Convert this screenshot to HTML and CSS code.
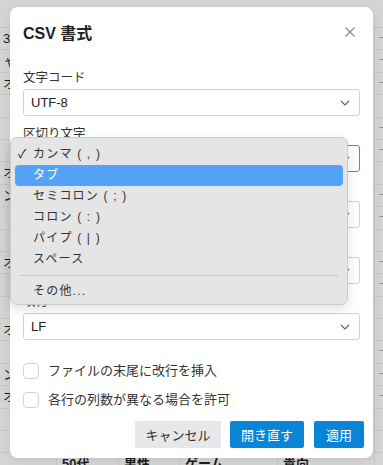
FILE: index.html
```html
<!DOCTYPE html>
<html lang="ja">
<head>
<meta charset="utf-8">
<link rel="stylesheet" href="styles.css">
</head>
<body>
<div class="sheet">
  <div class="sheet-top"></div>
  <div class="rows">
    <div class="row"><span class="c c1">3</span><span class="c c2"></span><span class="c c3"></span><span class="c c4"></span><span class="c c5"></span><span class="c c6">一</span></div>
    <div class="row"><span class="c c1">ャ</span><span class="c c2"></span><span class="c c3"></span><span class="c c4"></span><span class="c c5"></span><span class="c c6">一</span></div>
    <div class="row"><span class="c c1">オ</span><span class="c c2"></span><span class="c c3"></span><span class="c c4"></span><span class="c c5"></span><span class="c c6">一</span></div>
    <div class="row"><span class="c c1"></span><span class="c c2"></span><span class="c c3"></span><span class="c c4"></span><span class="c c5"></span><span class="c c6">丨</span></div>
    <div class="row"><span class="c c1"></span><span class="c c2"></span><span class="c c3"></span><span class="c c4"></span><span class="c c5"></span><span class="c c6">一</span></div>
    <div class="row"><span class="c c1"></span><span class="c c2"></span><span class="c c3"></span><span class="c c4"></span><span class="c c5"></span><span class="c c6">一</span></div>
    <div class="row"><span class="c c1">オ</span><span class="c c2"></span><span class="c c3"></span><span class="c c4"></span><span class="c c5"></span><span class="c c6">丨</span></div>
    <div class="row"><span class="c c1">ン</span><span class="c c2"></span><span class="c c3"></span><span class="c c4"></span><span class="c c5"></span><span class="c c6">一</span></div>
    <div class="row"><span class="c c1"></span><span class="c c2"></span><span class="c c3"></span><span class="c c4"></span><span class="c c5"></span><span class="c c6">一</span></div>
    <div class="row"><span class="c c1"></span><span class="c c2"></span><span class="c c3"></span><span class="c c4"></span><span class="c c5"></span><span class="c c6">丨</span></div>
    <div class="row"><span class="c c1">オ</span><span class="c c2"></span><span class="c c3"></span><span class="c c4"></span><span class="c c5"></span><span class="c c6">一</span></div>
    <div class="row"><span class="c c1"></span><span class="c c2"></span><span class="c c3"></span><span class="c c4"></span><span class="c c5"></span><span class="c c6">一</span></div>
    <div class="row"><span class="c c1"></span><span class="c c2"></span><span class="c c3"></span><span class="c c4"></span><span class="c c5"></span><span class="c c6">丨</span></div>
    <div class="row"><span class="c c1">オ</span><span class="c c2"></span><span class="c c3"></span><span class="c c4"></span><span class="c c5"></span><span class="c c6">丨</span></div>
    <div class="row"><span class="c c1"></span><span class="c c2"></span><span class="c c3"></span><span class="c c4"></span><span class="c c5"></span><span class="c c6">一</span></div>
    <div class="row"><span class="c c1">ン</span><span class="c c2"></span><span class="c c3"></span><span class="c c4"></span><span class="c c5"></span><span class="c c6">一</span></div>
    <div class="row"><span class="c c1">オ</span><span class="c c2"></span><span class="c c3"></span><span class="c c4"></span><span class="c c5"></span><span class="c c6">一</span></div>
    <div class="row"><span class="c c1"></span><span class="c c2"></span><span class="c c3"></span><span class="c c4"></span><span class="c c5"></span><span class="c c6">丨</span></div>
    <div class="row"><span class="c c1"></span><span class="c c2"></span><span class="c c3"></span><span class="c c4"></span><span class="c c5"></span><span class="c c6">丨</span></div>
    <div class="row"><span class="c c1"></span><span class="c c2">50代</span><span class="c c3">男性</span><span class="c c4">ゲーム</span><span class="c c5">貴向</span><span class="c c6"></span></div>
  </div>
</div>

<div class="dialog">
  <div class="dialog-head">
    <h1 class="dialog-title">CSV 書式</h1>
    <svg class="close" width="12" height="12" viewBox="0 0 12 12"><path d="M1.5 1.5 L10.5 10.5 M10.5 1.5 L1.5 10.5" stroke="#8a8a8a" stroke-width="1.2" fill="none"/></svg>
  </div>
  <div class="fields">
    <div class="field">
      <div class="label">文字コード</div>
      <div class="select"><span>UTF-8</span><svg class="chev" width="10" height="6" viewBox="0 0 10 6"><path d="M1 1 L5 5 L9 1" stroke="#666" stroke-width="1.2" fill="none"/></svg></div>
    </div>
    <div class="field">
      <div class="label">区切り文字</div>
      <div class="select focus"><span>カンマ ( , )</span><svg class="chev" width="10" height="6" viewBox="0 0 10 6"><path d="M1 1 L5 5 L9 1" stroke="#666" stroke-width="1.2" fill="none"/></svg></div>
    </div>
    <div class="field">
      <div class="label">引用符</div>
      <div class="select"><span>"</span><svg class="chev" width="10" height="6" viewBox="0 0 10 6"><path d="M1 1 L5 5 L9 1" stroke="#666" stroke-width="1.2" fill="none"/></svg></div>
    </div>
    <div class="field">
      <div class="label">エスケープ</div>
      <div class="select"><span>"</span><svg class="chev" width="10" height="6" viewBox="0 0 10 6"><path d="M1 1 L5 5 L9 1" stroke="#666" stroke-width="1.2" fill="none"/></svg></div>
    </div>
    <div class="field">
      <div class="label">改行</div>
      <div class="select"><span>LF</span><svg class="chev" width="10" height="6" viewBox="0 0 10 6"><path d="M1 1 L5 5 L9 1" stroke="#666" stroke-width="1.2" fill="none"/></svg></div>
    </div>
  </div>
  <div class="checks">
    <label class="check"><span class="box"></span><span>ファイルの末尾に改行を挿入</span></label>
    <label class="check"><span class="box"></span><span>各行の列数が異なる場合を許可</span></label>
  </div>
  <div class="actions">
    <button class="btn btn-gray">キャンセル</button>
    <button class="btn btn-blue">開き直す</button>
    <button class="btn btn-blue">適用</button>
  </div>
</div>

<div class="menu">
  <div class="item"><span class="tick">✓</span>カンマ ( , )</div>
  <div class="item active">タブ</div>
  <div class="item">セミコロン ( ; )</div>
  <div class="item">コロン ( : )</div>
  <div class="item">パイプ ( | )</div>
  <div class="item">スペース</div>
  <div class="sep"></div>
  <div class="item">その他...</div>
</div>
</body>
</html>
```

FILE: styles.css
```css
* { box-sizing: border-box; }
html, body {
  margin: 0;
  padding: 0;
  width: 383px;
  height: 465px;
  overflow: hidden;
  background: #d4d4d4;
  font-family: "Liberation Sans", "Noto Sans CJK JP", sans-serif;
  color: #222;
}

/* background spreadsheet (dimmed) */
.sheet { width: 383px; }
.sheet-top { height: 28px; border-bottom: 1px solid #c3c3c3; }
.row {
  display: flex;
  height: 22.4px;
  border-bottom: 1px solid #c6c6c6;
  font-size: 13px;
  line-height: 21px;
  color: #1c1c1c;
}
.c { display: block; overflow: hidden; white-space: nowrap; border-right: 1px solid #c6c6c6; padding-left: 3px; }
.c1 { width: 57px; }
.c2 { width: 62px; padding-left: 5px; font-weight: bold; }
.c3 { width: 61px; padding-left: 5px; font-weight: bold; }
.c4 { width: 98px; padding-left: 5px; font-weight: bold; }
.c5 { width: 97px; padding-left: 5px; font-weight: bold; }
.c6 { flex: 1; border-right: none; color: #8a8a8a; font-size: 11px; padding-left: 4px; }

/* dialog */
.dialog {
  position: absolute;
  left: 10px;
  top: 7px;
  width: 363px;
  height: 451px;
  background: #fff;
  border-radius: 8px;
  box-shadow: 0 2px 10px rgba(0,0,0,0.08);
  padding: 0 9px 0 13px;
}
.dialog-head {
  display: flex;
  justify-content: space-between;
  align-items: center;
  height: 49px;
  padding: 0 8px 0 0;
}
.dialog-title {
  margin: 0;
  font-size: 16px;
  font-weight: bold;
  color: #222;
}
.close { display: block; }

.fields {
  display: flex;
  flex-direction: column;
  gap: 10px;
  padding-top: 14px;
  padding-right: 4px;
}
.label {
  font-size: 12.5px;
  line-height: 16px;
  color: #333;
  margin-bottom: 3px;
}
.select {
  height: 27px;
  border: 1px solid #d2d2d2;
  border-radius: 3px;
  display: flex;
  align-items: center;
  justify-content: space-between;
  padding: 0 9px 0 7px;
  font-size: 13px;
  color: #222;
}
.select.focus { border-color: #1d9bf0; }
.chev { display: block; }

.checks {
  display: flex;
  flex-direction: column;
  gap: 13px;
  padding-top: 23px;
}
.check {
  display: flex;
  align-items: center;
  gap: 9px;
  font-size: 13px;
  line-height: 16px;
  color: #333;
}
.box {
  width: 16px;
  height: 16px;
  border: 1px solid #d3d3d3;
  border-radius: 4px;
  background: #fff;
}

.actions {
  display: flex;
  justify-content: flex-end;
  gap: 9px;
  margin-top: 13px;
}
.btn {
  height: 27px;
  border: none;
  border-radius: 2px;
  font-family: inherit;
  font-size: 13px;
  padding: 0;
}
.btn-gray { background: #e6e7ea; color: #333; width: 86px; }
.btn-blue { background: #0a84d6; color: #fff; width: 74px; }
.btn-blue:last-child { width: 50px; margin-left: 1px; }

/* dropdown menu */
.menu {
  position: absolute;
  left: 10px;
  top: 137px;
  width: 338px;
  height: 168px;
  background: #e5e5e5;
  border: 1px solid #cacaca;
  border-radius: 7px;
  box-shadow: 0 4px 12px rgba(0,0,0,0.12);
  padding: 6px 4px 0 4px;
}
.item {
  position: relative;
  height: 21px;
  line-height: 21px;
  font-size: 12px;
  letter-spacing: 1.2px;
  color: #333;
  padding-left: 18px;
  border-radius: 4px;
}
.item.active { background: #55a2f9; color: #fff; }
.tick { position: absolute; left: 3px; top: 0; font-size: 12px; color: #222; letter-spacing: 0; }
.sep { height: 1px; background: #c6c6c6; margin: 5px 5px 5px 5px; }
```
